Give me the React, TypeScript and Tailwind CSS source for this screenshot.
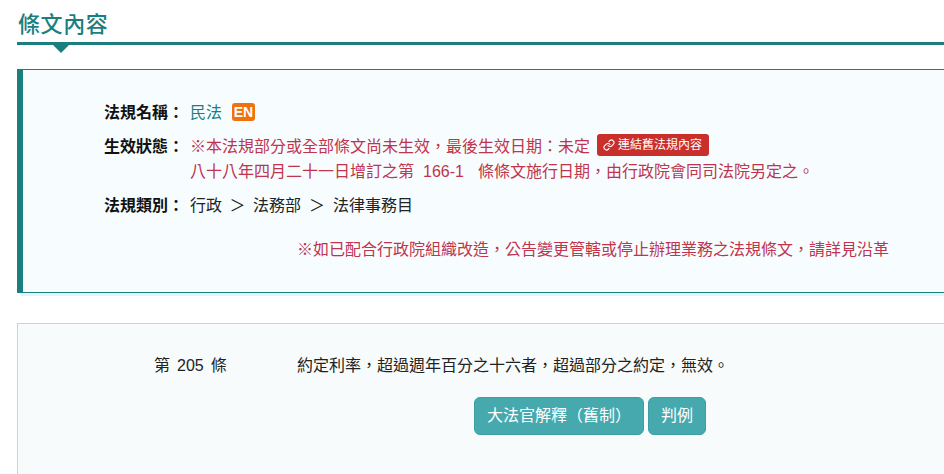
import React from 'react';
import { Link } from 'lucide-react';

const fontStack = "font-['Liberation_Sans','Noto_Sans_CJK_TC',sans-serif]";

const App: React.FC = () => {
  return (
    <div className={`w-[944px] h-[474px] overflow-hidden bg-white pl-[17px] text-[16px] leading-[24px] text-[#222] ${fontStack}`}>
      {/* Section title */}
      <div className="w-[1000px] pt-[9px]">
        <h2 className="h-[33px] pl-px text-[22px] leading-[31px] tracking-[0.6px] font-medium text-[#1b7f80]">條文內容</h2>
        <div className="h-[3px] bg-[#1b7f80]" />
        <div className="ml-[36px] w-0 h-0 border-x-[8px] border-x-transparent border-t-[8px] border-t-[#1b7f80]" />
      </div>

      {/* Law info */}
      <div className="mt-[16px] w-[1000px] h-[224px] border-l-[6px] border-y border-l-[#1b7f80] border-y-[#1b7f80] bg-[#f7fdfe] shadow-[3px_3px_0_#dff7f7] pt-[31px]">
        <div className="flex pl-[81px] h-[29px]">
          <span className="w-[86px] font-bold text-[#111]">法規名稱：</span>
          <span className="text-[#1b7f80]">民法</span>
          <span className="ml-[10px] mt-[2px] w-[23px] h-[18px] rounded-[3px] bg-[#f0720f] text-white text-[14px] leading-[18px] font-bold text-center">EN</span>
        </div>
        <div className="flex pl-[81px] pt-[5px]">
          <span className="w-[86px] font-bold text-[#111]">生效狀態：</span>
          <div className="text-[#c0344d]">
            <div className="flex h-[25px]">
              <span>※本法規部分或全部條文尚未生效，最後生效日期：未定</span>
              <span className="ml-[7px] -mt-px flex items-center gap-[3px] w-[112px] h-[22px] pl-[6px] rounded-[3px] bg-[#c9302c] text-white text-[12px] leading-[22px]">
                <Link className="w-[12px] h-[12px]" strokeWidth={2.2} />
                連結舊法規內容
              </span>
            </div>
            <div className="flex">
              <span>八十八年四月二十一日增訂之第</span>
              <span className="ml-[9px] w-[55px]">166-1</span>
              <span>條條文施行日期，由行政院會同司法院另定之。</span>
            </div>
          </div>
        </div>
        <div className="flex pl-[81px] pt-[10px]">
          <span className="w-[86px] font-bold text-[#111]">法規類別：</span>
          <span>行政</span>
          <span className="w-[31px] text-center">＞</span>
          <span>法務部</span>
          <span className="w-[32px] text-center">＞</span>
          <span>法律事務目</span>
        </div>
        <div className="mt-[20px] pl-[274px] text-[#c0344d]">※如已配合行政院組織改造，公告變更管轄或停止辦理業務之法規條文，請詳見沿革</div>
      </div>

      {/* Article */}
      <div className="mt-[30px] w-[1000px] h-[200px] border border-[#c5d6da] bg-[#f8fbfb] pt-[30px]">
        <div className="flex">
          <div className="ml-[136px] w-[143px] flex gap-[7px]">
            <span>第</span>
            <span>205</span>
            <span>條</span>
          </div>
          <span>約定利率，超過週年百分之十六者，超過部分之約定，無效。</span>
        </div>
        <div className="mt-[19px] ml-[456px] flex gap-[4px]">
          <button className="w-[170px] h-[38px] rounded-[6px] border border-[#3d9ea3] bg-[#45a9ae] text-white text-[16px]">大法官解釋（舊制）</button>
          <button className="w-[58px] h-[38px] rounded-[6px] border border-[#3d9ea3] bg-[#45a9ae] text-white text-[16px]">判例</button>
        </div>
      </div>
    </div>
  );
};

export default App;
